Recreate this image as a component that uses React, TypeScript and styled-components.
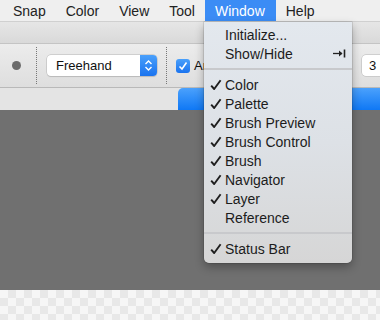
import React from "react";
import styled, { createGlobalStyle } from "styled-components";

const GlobalStyle = createGlobalStyle`
  html, body {
    margin: 0;
    padding: 0;
    width: 380px;
    height: 320px;
    overflow: hidden;
    font-family: "Liberation Sans", Arial, sans-serif;
  }
`;

export const Screen = styled.div`
  position: relative;
  width: 380px;
  height: 320px;
  display: flex;
  flex-direction: column;
  overflow: hidden;
`;

export const MenuBar = styled.div`
  height: 22px;
  display: flex;
  align-items: stretch;
  padding-left: 3px;
  background: #efefef;
  border-bottom: 1px solid #d0d0d0;
  box-sizing: border-box;
`;

export const MenuTitle = styled.div<{ $active?: boolean }>`
  display: flex;
  align-items: center;
  padding: 0 ${(p) => (p.$active ? "11px" : "10px")} 0 10px;
  font-size: 14px;
  color: ${(p) => (p.$active ? "#ffffff" : "#222222")};
  background: ${(p) => (p.$active ? "#3b8cf5" : "transparent")};
`;

export const TabStrip = styled.div`
  height: 22px;
  background: linear-gradient(#e6e6e6, #d9d9d9);
  border-bottom: 1px solid #c4c4c4;
  box-sizing: border-box;
`;

export const Toolbar = styled.div`
  height: 44px;
  display: flex;
  align-items: center;
  background: linear-gradient(#ececec, #dedede);
  border-bottom: 1px solid #b9b9b9;
  box-sizing: border-box;
`;

export const Dot = styled.div`
  width: 9px;
  height: 9px;
  border-radius: 50%;
  background: #6b6b6b;
  margin: 0 15px 0 12px;
`;

export const DottedRule = styled.div`
  align-self: stretch;
  margin: 3px 0;
  border-left: 1px dotted #777;
`;

export const Select = styled.div`
  width: 110px;
  height: 21px;
  margin: 0 9px 0 10px;
  display: flex;
  border-radius: 4px;
  background: #fff;
  box-shadow: 0 0 0 0.5px #b5b5b5, 0 1px 1px rgba(0, 0, 0, 0.15);
  overflow: hidden;
`;

export const SelectLabel = styled.div`
  flex: 1;
  padding-left: 9px;
  font-size: 13px;
  line-height: 21px;
  color: #111;
`;

export const Stepper = styled.div`
  width: 17px;
  display: flex;
  align-items: center;
  justify-content: center;
  background: linear-gradient(#4aa0fb, #1a73ef);
`;

export const Check = styled.div`
  width: 14px;
  height: 14px;
  margin-left: 9px;
  border-radius: 3px;
  background: linear-gradient(#4aa0fb, #1a73ef);
  display: flex;
  align-items: center;
  justify-content: center;
`;

export const CheckLabel = styled.span`
  margin-left: 4px;
  font-size: 13px;
  color: #111;
`;

export const NumberBox = styled.div`
  margin-left: auto;
  width: 18px;
  height: 21px;
  border-radius: 4px 0 0 4px;
  background: #fff;
  box-shadow: 0 0 0 0.5px #b5b5b5;
  font-size: 13px;
  line-height: 21px;
  padding-left: 7px;
  box-sizing: border-box;
  color: #111;
`;

export const PanelStrip = styled.div`
  height: 22px;
  display: flex;
  background: #e4e4e4;
`;

export const BlueTab = styled.div`
  margin-left: auto;
  width: 202px;
  border-radius: 5px 0 0 0;
  background: linear-gradient(#4ba1fc, #0f78f5);
`;

export const Canvas = styled.div`
  flex: 1;
  background: #707070;
`;

export const Checker = styled.div`
  height: 30px;
  background-color: #f6f6f6;
  background-image: linear-gradient(45deg, #e8e8e8 25%, transparent 25%, transparent 75%, #e8e8e8 75%),
    linear-gradient(45deg, #e8e8e8 25%, transparent 25%, transparent 75%, #e8e8e8 75%);
  background-size: 16px 16px;
  background-position: 0 0, 8px 8px;
`;

export const Dropdown = styled.div`
  position: absolute;
  left: 204px;
  top: 22px;
  width: 148px;
  padding: 3px 0 5px;
  border-radius: 0 0 5px 5px;
  background: linear-gradient(#e3e8ee, #dde1e6 50%, #d6d6d6);
  box-shadow: 0 4px 10px rgba(0, 0, 0, 0.3), 0 0 0 0.5px rgba(0, 0, 0, 0.2);
`;

export const Item = styled.div`
  position: relative;
  height: 19px;
  display: flex;
  align-items: center;
  padding: 0 6px 0 21px;
  font-size: 14px;
  color: #1c1c1c;
`;

export const Tick = styled.span`
  position: absolute;
  left: 6px;
  top: 4px;
  display: flex;
`;

export const Shortcut = styled.span`
  margin-left: auto;
  display: flex;
  align-items: center;
`;

export const Separator = styled.div`
  height: 2px;
  margin: 5px 0 5px;
  background: #c8c9cc;
`;

const ChevronUpDown = () => (
  <svg width="9" height="13" viewBox="0 0 9 13">
    <path d="M1.5 5 L4.5 2 L7.5 5 M1.5 8 L4.5 11 L7.5 8" fill="none" stroke="#fff" strokeWidth="1.4" />
  </svg>
);

const CheckMark = () => (
  <svg width="10" height="10" viewBox="0 0 10 10">
    <path d="M1.5 5.5 L4 8 L8.5 1.5" fill="none" stroke="#fff" strokeWidth="1.6" />
  </svg>
);

const MenuTick = () => (
  <svg width="12" height="12" viewBox="0 0 12 12">
    <path d="M1.2 6.6 L4.2 10 L10.6 1.2" fill="none" stroke="#1f1f1f" strokeWidth="1.9" strokeLinejoin="round" />
  </svg>
);

const TabKey = () => (
  <svg width="13" height="9" viewBox="0 0 13 9">
    <path d="M0 4.5 H9" stroke="#222" strokeWidth="1.3" />
    <path d="M6 1.5 L9.5 4.5 L6 7.5 Z" fill="#222" />
    <path d="M11.5 0.5 V8.5" stroke="#222" strokeWidth="1.6" />
  </svg>
);

const menus = ["Snap", "Color", "View", "Tool", "Window", "Help"];

const panels: [string, boolean][] = [
  ["Color", true],
  ["Palette", true],
  ["Brush Preview", true],
  ["Brush Control", true],
  ["Brush", true],
  ["Navigator", true],
  ["Layer", true],
  ["Reference", false],
];

const App = () => {
  return (
    <Screen>
      <GlobalStyle />
      <MenuBar>
        {menus.map((m) => (
          <MenuTitle key={m} $active={m === "Window"}>
            {m}
          </MenuTitle>
        ))}
      </MenuBar>
      <TabStrip />
      <Toolbar>
        <Dot />
        <DottedRule />
        <Select>
          <SelectLabel>Freehand</SelectLabel>
          <Stepper>
            <ChevronUpDown />
          </Stepper>
        </Select>
        <DottedRule />
        <Check>
          <CheckMark />
        </Check>
        <CheckLabel>Anti-alias</CheckLabel>
        <NumberBox>3</NumberBox>
      </Toolbar>
      <PanelStrip>
        <BlueTab />
      </PanelStrip>
      <Canvas />
      <Checker />
      <Dropdown>
        <Item>Initialize...</Item>
        <Item>
          Show/Hide
          <Shortcut>
            <TabKey />
          </Shortcut>
        </Item>
        <Separator />
        {panels.map(([name, on]) => (
          <Item key={name}>
            {on && (
              <Tick>
                <MenuTick />
              </Tick>
            )}
            {name}
          </Item>
        ))}
        <Separator />
        <Item>
          <Tick>
            <MenuTick />
          </Tick>
          Status Bar
        </Item>
      </Dropdown>
    </Screen>
  );
};

export default App;
